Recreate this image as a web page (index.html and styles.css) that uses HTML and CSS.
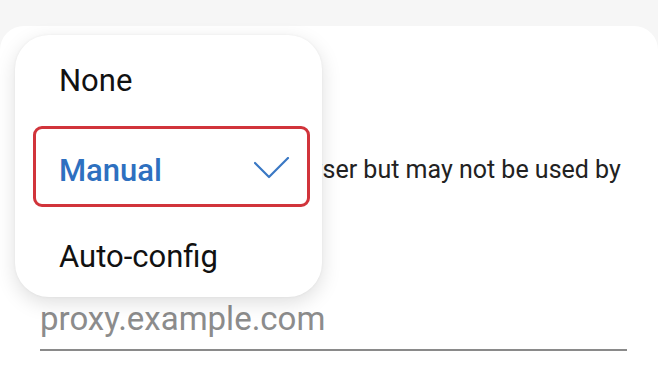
FILE: index.html
```html
<!DOCTYPE html>
<html lang="en">
<head>
    <meta charset="UTF-8">
    <meta name="viewport" content="width=device-width, initial-scale=1.0">
    <title>Proxy settings</title>
    <link rel="stylesheet" href="styles.css">
</head>
<body>

<div class="sheet">
    <p class="desc">Proxy is used by the browser but may not be used by other apps.</p>
    <input class="host-input" type="text" placeholder="proxy.example.com">
</div>

<ul class="type-menu">
    <li class="menu-item item-none">None</li>
    <li class="menu-item item-manual selected">
        <span>Manual</span>
        <svg class="check" width="36" height="22" viewBox="0 0 36 22">
            <polyline points="1,6 15,20 34,1" fill="none" stroke="#3a78c4" stroke-width="2.2" stroke-linecap="round" stroke-linejoin="round"/>
        </svg>
        <div class="highlight"></div>
    </li>
    <li class="menu-item item-auto">Auto-config</li>
</ul>

</body>
</html>
```

FILE: styles.css
```css
body {
    font-family: Roboto, "Noto Sans", sans-serif;
    background-color: #f6f6f6;
    color: #1a1a1a;
    margin: 0;
    padding: 0;
    width: 658px;
    height: 390px;
    overflow: hidden;
}

.sheet {
    margin-top: 26px;
    height: 364px;
    box-sizing: border-box;
    padding: 128px 31px 0 40px;
    background-color: #ffffff;
    border-radius: 24px 24px 0 0;
}

.desc {
    margin: 0;
    font-size: 25px;
    line-height: 32px;
    color: #222;
}

.host-input {
    display: block;
    width: 100%;
    height: 64px;
    box-sizing: border-box;
    margin-top: 69px;
    padding: 0;
    border: none;
    border-bottom: 2px solid #8a8a8a;
    background: transparent;
    outline: none;
    font-family: Roboto, "Noto Sans", sans-serif;
    font-size: 33px;
    color: #333;
}

.host-input::placeholder {
    color: #8c8c8c;
}

/* dropdown for proxy type */
.type-menu {
    position: absolute;
    left: 15px;
    top: 35px;
    width: 307px;
    height: 262px;
    box-sizing: border-box;
    margin: 0;
    padding: 0;
    list-style: none;
    background-color: #ffffff;
    border-radius: 34px;
    box-shadow: 0 6px 20px rgba(0, 0, 0, 0.13), 0 0 3px rgba(0, 0, 0, 0.05);
    z-index: 2;
}

.menu-item {
    position: relative;
    display: flex;
    align-items: center;
    justify-content: space-between;
    padding: 0 32px 0 44px;
    font-size: 31px;
    color: #111;
}

.item-none {
    height: 90px;
}

.item-manual {
    height: 90px;
}

.item-auto {
    height: 82px;
}

.selected {
    color: #2e70c0;
    font-weight: 500;
}

.check {
    margin-top: -4px;
}

.highlight {
    position: absolute;
    left: 18px;
    top: 1px;
    width: 277px;
    height: 81px;
    box-sizing: border-box;
    border: 3px solid #d1343b;
    border-radius: 9px;
}
```
